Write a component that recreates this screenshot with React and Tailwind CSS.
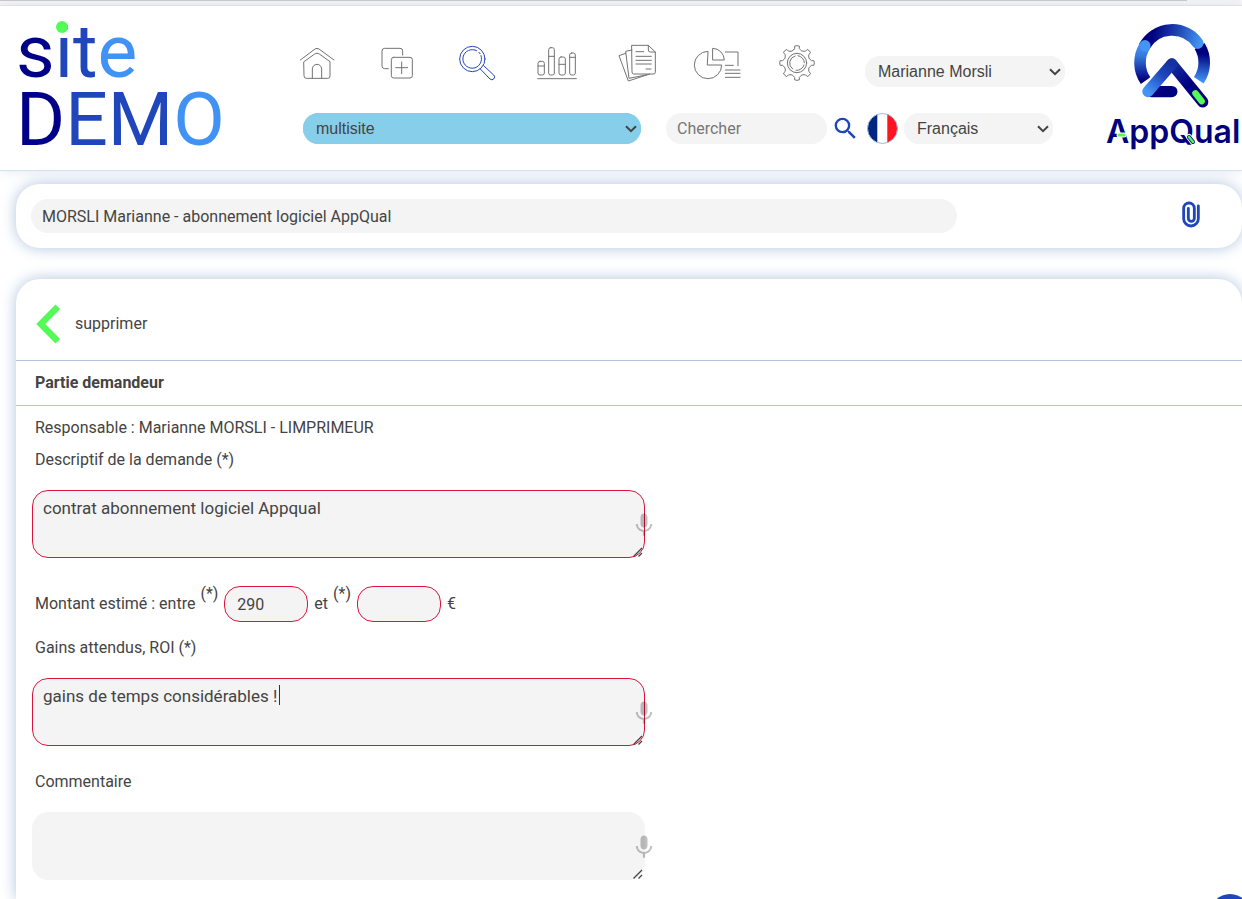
import React from "react";
import { MdKeyboardVoice, MdSearch } from "react-icons/md";

const gearPath = (() => {
  const cx = 651;
  const cy = 100;
  const at = (r, deg) => {
    const a = (deg * Math.PI) / 180;
    return `${(cx + r * Math.cos(a)).toFixed(1)} ${(cy + r * Math.sin(a)).toFixed(1)}`;
  };
  const parts = [];
  for (let i = 0; i < 8; i += 1) {
    const c = i * 45 - 90;
    parts.push(`${i === 0 ? "M" : "L"}${at(41, c - 14)}`);
    parts.push(`L${at(44, c - 9)} L${at(51, c - 8)} L${at(52, c)} L${at(51, c + 8)} L${at(44, c + 9)} L${at(41, c + 14)}`);
    parts.push(`Q${at(37, c + 22)} ${at(41, c + 31)}`);
  }
  return `${parts.join(" ")} Z`;
})();

const navItems = [
  {
    label: "Accueil",
    viewBox: "51 40 120 120",
    art: (
      <>
        <path d="M61 91 L105 58 Q111 54 117 58 L162 91" />
        <path d="M72 96 L104 73 Q111 68 118 73 L150 96 V139 Q150 146 143 146 H79 Q72 146 72 139 Z" />
        <path d="M97 146 V118 a14 14 0 0 1 28 0 V146" />
      </>
    ),
  },
  {
    label: "Ajouter",
    viewBox: "291 40 120 120",
    art: (
      <>
        <path d="M325 117 H314 Q306 117 306 109 V64 Q306 56 314 56 H360 Q368 56 368 64 V76" />
        <rect x="334" y="83" width="63" height="62" rx="7" />
        <path d="M365 97 V132 M347 114 H383" />
      </>
    ),
  },
  {
    label: "Rechercher",
    viewBox: "531 40 120 120",
    active: true,
    art: (
      <>
        <circle cx="577" cy="88" r="38" />
        <path d="M590 63 A28 28 0 1 0 603 78 M597 68 l3 4" />
        <path d="M601 118 L630 148 a8 8 0 0 0 11 -12 L611 108" />
      </>
    ),
  },
  {
    label: "Statistiques",
    viewBox: "771 40 120 120",
    art: (
      <>
        <rect x="774" y="95" width="19" height="41" rx="6" />
        <rect x="806" y="54" width="17" height="82" rx="6" />
        <rect x="837" y="82" width="19" height="54" rx="6" />
        <rect x="869" y="70" width="17" height="66" rx="6" />
        <path d="M774 109 H793 M806 80 H823 M837 104 H856 M869 83 H886" />
        <path d="M773 147 H889" />
      </>
    ),
  },
  {
    label: "Documents",
    viewBox: "111 40 120 120",
    art: (
      <>
        <path d="M156 47 H205 L226 67 V128 Q226 133 221 133 H161 Q156 133 156 128 Z" />
        <path d="M205 47 V61 Q205 67 211 67 H226" />
        <path d="M168 66 H191 M168 80 H214 M168 92 H214 M168 103 H214 M198 118 H213" />
        <path d="M156 61 L137 65 L147 146 L208 134" />
        <path d="M137 71 L117 78 L145 154 L200 136" />
      </>
    ),
  },
  {
    label: "Rapports",
    viewBox: "336 40 150 120",
    wide: true,
    art: (
      <>
        <path d="M383 65 A41 41 0 1 0 425 106 H383 Z" />
        <path d="M399 56 A35 36 0 0 1 433 91 H399 Z" />
        <path d="M436 67 H474 V108 M436 107 H460" />
        <path d="M436 121 H480 M436 131 H480 M436 143 H480" />
      </>
    ),
  },
  {
    label: "Paramètres",
    viewBox: "591 40 120 120",
    art: (
      <>
        <path d={gearPath} />
        <circle cx="651" cy="100" r="29" />
        <path d="M645 79 A22 22 0 0 0 638 118 M654 78 A22 22 0 0 1 673 99 M672 106 A22 22 0 0 1 648 122" />
      </>
    ),
  },
];

function NavIcons() {
  return (
    <nav className="flex">
      {navItems.map((item) => (
        <a key={item.label} href="#" aria-label={item.label} className="flex w-20 justify-center">
          <svg
            viewBox={item.viewBox}
            fill="none"
            strokeWidth="3"
            strokeLinecap="round"
            strokeLinejoin="round"
            className={`h-10 ${item.wide ? "w-[50px]" : "w-10"} ${item.active ? "stroke-[#2046bc]" : "stroke-[#737373]"}`}
          >
            {item.art}
          </svg>
        </a>
      ))}
    </nav>
  );
}

function SiteLogo() {
  return (
    <a href="#" className="relative block w-[277px] shrink-0 pt-[11px] pl-4 text-[75px] leading-[68px] text-[#2046bc]">
      <span className="block">
        <span className="text-[#000088]">s</span>it<span className="text-[#4192f5]">e</span>
      </span>
      <span className="block">
        <span className="text-[#000088]">D</span>EM<span className="text-[#4192f5]">O</span>
      </span>
      <span className="absolute top-[15px] left-14 size-3 rounded-full bg-[#53fb57]" />
    </a>
  );
}

function Brand() {
  return (
    <a href="#" className="relative ml-auto block w-[136px] shrink-0 pt-4 font-['Inter',sans-serif] text-[#00007f]">
      <svg viewBox="130 65 235 264" className="ml-[27px] h-[88px] w-[78px]" fill="none">
        <defs>
          <linearGradient id="ringLeft" gradientUnits="userSpaceOnUse" x1="160" y1="130" x2="160" y2="240">
            <stop offset="0" stopColor="#4396f5" />
            <stop offset="0.35" stopColor="#3478db" />
            <stop offset="1" stopColor="#00007f" />
          </linearGradient>
          <linearGradient id="ringTop" gradientUnits="userSpaceOnUse" x1="190" y1="90" x2="335" y2="125">
            <stop offset="0" stopColor="#00007f" />
            <stop offset="0.45" stopColor="#1c3fae" />
            <stop offset="1" stopColor="#4396f5" />
          </linearGradient>
          <linearGradient id="ringRight" gradientUnits="userSpaceOnUse" x1="345" y1="160" x2="335" y2="245">
            <stop offset="0" stopColor="#00007f" />
            <stop offset="1" stopColor="#4396f5" />
          </linearGradient>
          <linearGradient id="legLeft" gradientUnits="userSpaceOnUse" x1="175" y1="275" x2="247" y2="190">
            <stop offset="0" stopColor="#4396f5" />
            <stop offset="0.6" stopColor="#2046bc" />
            <stop offset="1" stopColor="#15309f" />
          </linearGradient>
          <linearGradient id="legRight" gradientUnits="userSpaceOnUse" x1="247" y1="190" x2="300" y2="255">
            <stop offset="0" stopColor="#15309f" />
            <stop offset="1" stopColor="#00007f" />
          </linearGradient>
        </defs>
        <path d="M330.6 136.6 A95 95 0 0 1 328 240" stroke="url(#ringRight)" strokeWidth="35" />
        <path d="M165 136.6 A95 95 0 0 1 325 128" stroke="url(#ringTop)" strokeWidth="35" strokeLinecap="round" />
        <path d="M168 241 A95 95 0 0 1 166 136" stroke="url(#ringLeft)" strokeWidth="35" />
        <circle cx="166" cy="136" r="17" fill="#4396f5" />
        <path d="M175 274 L247 191 L340 305" stroke="#fff" strokeWidth="46" strokeLinecap="round" strokeLinejoin="round" />
        <path d="M185 274 H247" stroke="#00007f" strokeWidth="34" strokeLinecap="round" />
        <path d="M247 191 L340 305" stroke="url(#legRight)" strokeWidth="34" strokeLinecap="round" />
        <path d="M175 274 L247 191" stroke="url(#legLeft)" strokeWidth="34" strokeLinecap="round" />
        <path d="M318 279 L337 303" stroke="#53fb57" strokeWidth="19" strokeLinecap="round" />
      </svg>
      <span className="block text-[32px] leading-[44px] font-semibold whitespace-nowrap">AppQual</span>
      <svg viewBox="0 0 100 30" className="absolute top-[112px] left-0 h-[30px] w-[100px]" fill="none" strokeLinecap="round">
        <path d="M13 17 H18" stroke="#fff" strokeWidth="5" />
        <path d="M13 17 H18" stroke="#53fb57" strokeWidth="3" />
        <path d="M83 19 L87 24" stroke="#fff" strokeWidth="6" />
        <path d="M83 19 L87 24" stroke="#00007f" strokeWidth="4" />
        <path d="M83 19 L87 24" stroke="#53fb57" strokeWidth="2.4" />
      </svg>
    </a>
  );
}

function Flag() {
  return (
    <svg viewBox="0 0 31 31" className="size-[31px] shrink-0" role="img" aria-label="France">
      <clipPath id="flagDisc">
        <circle cx="15.5" cy="15.5" r="15" />
      </clipPath>
      <g clipPath="url(#flagDisc)">
        <path fill="#fff" d="M0 0H31V31H0z" />
        <path fill="#00267f" d="M0 0H10.3V31H0z" />
        <path fill="#ff1521" d="M20.3 0H31V31H20.3z" />
      </g>
      <circle cx="15.5" cy="15.5" r="15" fill="none" stroke="#9db9dc" />
    </svg>
  );
}

function Select({ label, option, className }) {
  return (
    <div className={`relative h-[31px] ${className}`}>
      <select
        aria-label={label}
        className="h-full w-full appearance-none rounded-full bg-inherit pr-6 pl-[13px] font-['Liberation_Sans',sans-serif] text-base"
      >
        <option>{option}</option>
      </select>
      <svg
        viewBox="0 0 12 8"
        className="pointer-events-none absolute top-3 right-1 h-2 w-3"
        fill="none"
        stroke="#444444"
        strokeWidth="2"
      >
        <path d="M1 1.2 L6 6.2 L11 1.2" />
      </svg>
    </div>
  );
}

function Header() {
  return (
    <header className="flex border-b border-[#d5e2f0] pb-4 shadow-[0_0_12px_#b0c4de66]">
      <SiteLogo />
      <div className="flex shrink-0 flex-col gap-[26px] pt-[37px]">
        <div className="flex h-[44px] items-start">
          <NavIcons />
          <Select label="Utilisateur" option="Marianne Morsli" className="mt-[13px] ml-7 w-[200px] rounded-full bg-[#f4f4f4]" />
        </div>
        <div className="flex items-center pl-[26px]">
          <Select label="Site" option="multisite" className="w-[338px] rounded-full bg-[#87ceeb]" />
          <input
            type="search"
            aria-label="Chercher"
            placeholder="Chercher"
            className="ml-[25px] h-[31px] w-[161px] rounded-full bg-[#f4f4f4] px-[11px] placeholder:text-[#777777]"
          />
          <button type="button" aria-label="Lancer la recherche" className="mr-1 flex w-9 justify-center text-[#2046bc]">
            <MdSearch size={29} />
          </button>
          <Flag />
          <Select label="Langue" option="Français" className="ml-[6px] w-[149px] rounded-full bg-[#f4f4f4]" />
        </div>
      </div>
      <Brand />
    </header>
  );
}

function Area({ id, value, required, caret }) {
  return (
    <div className="relative mt-[14px] ml-4 h-[68px] w-1/2">
      <textarea
        id={id}
        defaultValue={value}
        className={`block h-full w-full resize-none rounded-2xl border bg-[#f4f4f4] px-[10px] py-[5px] text-[17px] leading-6 ${required ? "border-[#dc143c]" : "border-[#f4f4f4]"}`}
      />
      {caret && <span className="absolute top-[7px] left-[247px] h-5 w-px bg-[#333333]" />}
      <button type="button" aria-label="Dicter" className="absolute top-5 -right-[13px] text-black/25">
        <MdKeyboardVoice size={28} />
      </button>
      <svg
        viewBox="0 0 10 10"
        className="pointer-events-none absolute right-[2px] bottom-[1px] size-[10px]"
        fill="none"
        stroke="#444444"
        strokeWidth="1.3"
      >
        <path d="M0.5 9.5 L9 1 M5.5 9.5 L9 6" />
      </svg>
    </div>
  );
}

export default function App() {
  return (
    <div className="flex min-h-screen flex-col overflow-hidden bg-white font-['Roboto',sans-serif] text-base text-[#444444]">
      <div className="h-[6px] shrink-0 border-b border-[#e8e6e8] bg-[#f7f5f7]">
        <div className="h-px w-[95.6%] bg-[#c9c6c9]" />
      </div>
      <Header />

      <section className="mt-[13px] ml-4 flex h-16 items-center justify-between rounded-3xl bg-white pr-[42px] pl-[15px] shadow-[0_0_15px_#b0c4de]">
        <input
          aria-label="Titre"
          defaultValue="MORSLI Marianne - abonnement logiciel AppQual"
          className="h-[34px] w-[926px] rounded-full bg-[#f4f4f4] px-[11px]"
        />
        <button type="button" aria-label="Pièces jointes" className="pb-1">
          <svg viewBox="277 600 54 81" className="h-[27px] w-[18px]" fill="none" stroke="#2046bc" strokeWidth="8.5" strokeLinecap="round">
            <path d="M326 615 V653 a22 22 0 0 1 -44 0 V622 a16 16 0 0 1 32 0 V652 a9 9 0 0 1 -18 0 V622" />
          </svg>
        </button>
      </section>

      <section className="mt-[31px] ml-4 grow rounded-t-3xl bg-white pb-4 shadow-[0_0_15px_#b0c4de]">
        <div className="flex h-[81px] items-center gap-[14px] pt-2 pl-5">
          <button type="button" aria-label="Retour">
            <svg viewBox="0 0 25 40" className="h-10 w-[25px]" fill="none" stroke="#53fb57" strokeWidth="6.5">
              <path d="M21.8 2.8 L4.8 20 L21.8 37.2" />
            </svg>
          </button>
          <button type="button">supprimer</button>
        </div>
        <h2 className="flex h-[46px] items-center border-y border-[#b0c4de] pl-[19px] font-bold">Partie demandeur</h2>

        <form className="pt-[6px] leading-8">
          <p className="pl-[19px]">Responsable : Marianne MORSLI - LIMPRIMEUR</p>
          <label htmlFor="descriptif" className="block pl-[19px]">
            Descriptif de la demande (*)
          </label>
          <Area id="descriptif" value="contrat abonnement logiciel Appqual" required />

          <div className="mt-7 flex h-9 items-center pl-[19px]">
            <label htmlFor="min">Montant estimé : entre</label>
            <span className="mr-[6px] ml-[5px] self-start leading-4">(*)</span>
            <input
              id="min"
              defaultValue="290"
              className="h-9 w-[84px] rounded-2xl border border-[#dc143c] bg-[#f4f4f4] px-3"
            />
            <label htmlFor="max" className="ml-[6px]">
              et
            </label>
            <span className="mr-[6px] ml-[5px] self-start leading-4">(*)</span>
            <input id="max" className="h-9 w-[84px] rounded-2xl border border-[#dc143c] bg-[#f4f4f4] px-3" />
            <span className="ml-[6px]">€</span>
          </div>

          <label htmlFor="gains" className="mt-[10px] block pl-[19px]">
            Gains attendus, ROI (*)
          </label>
          <Area id="gains" value="gains de temps considérables !" required caret />

          <label htmlFor="commentaire" className="mt-5 block pl-[19px]">
            Commentaire
          </label>
          <Area id="commentaire" value="" />
        </form>
      </section>

      <button type="button" aria-label="Aide" className="fixed -right-2 -bottom-[35px] size-10 rounded-full bg-[#2046bc]" />
    </div>
  );
}
